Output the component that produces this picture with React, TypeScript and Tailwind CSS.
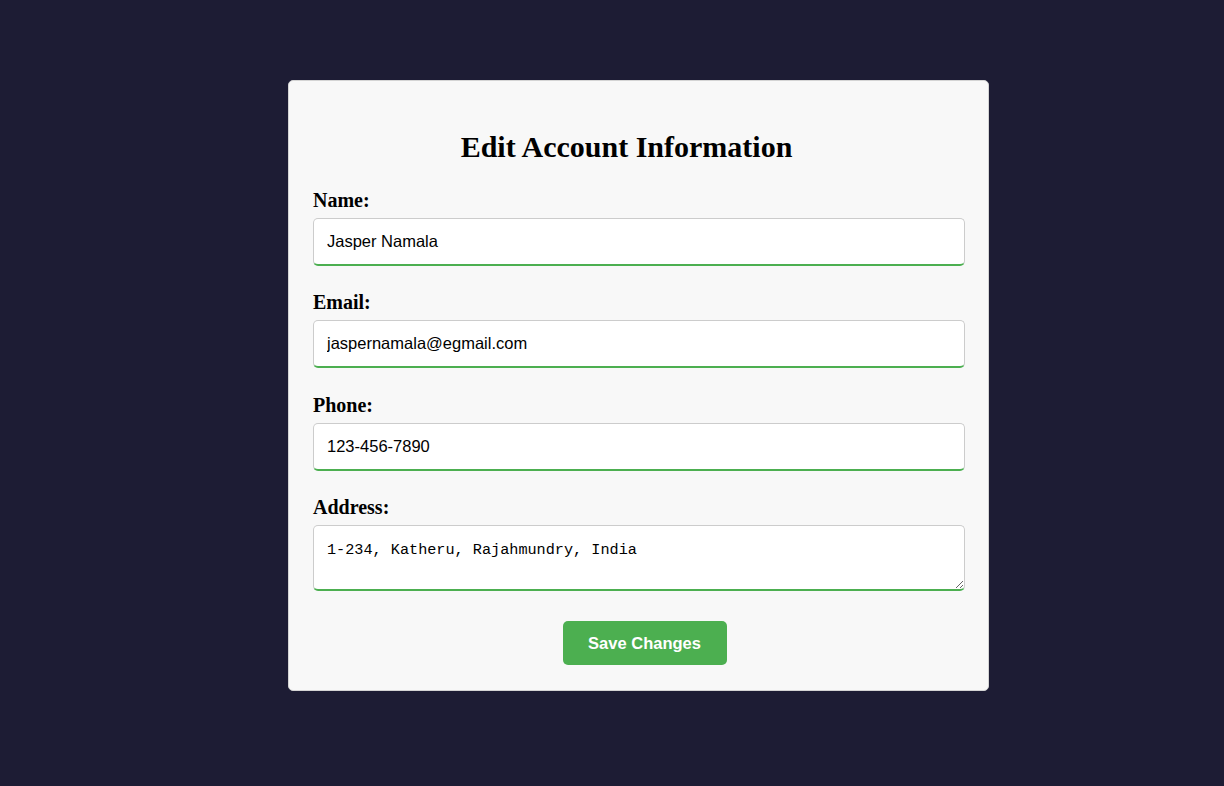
const fields = [
  { label: 'Name:', value: 'Jasper Namala' },
  { label: 'Email:', value: 'jaspernamala@egmail.com' },
  { label: 'Phone:', value: '123-456-7890' },
];

const labelCls =
  "block text-[20px] leading-[24px] font-bold text-black font-['Liberation_Serif',serif] mb-[6px]";

const App = () => {
  return (
    <div className="min-h-[786px] w-full bg-[#1d1c34] pt-[80px] pl-[288px]">
      <div className="w-[701px] rounded-[5px] border border-[#d4d4d4] bg-[#f8f8f8] pl-6 pr-[23px] pt-[48px] pb-[25px]">
        <h2 className="pr-[25px] text-center text-[30px] leading-[36px] font-bold text-black font-['Liberation_Serif',serif] mb-[23px]">
          Edit Account Information
        </h2>
        <form className="flex flex-col" onSubmit={(e) => e.preventDefault()}>
          {fields.map((f) => (
            <div key={f.label} className="mb-[24.4px]">
              <label className={labelCls}>{f.label}</label>
              <input
                defaultValue={f.value}
                className="block h-[48px] w-[652px] rounded-[5px] border border-b-2 border-[#cccccc] border-b-[#4caf50] bg-white pl-[13px] pr-3 text-[16.5px] text-black font-['Liberation_Sans',Arial,sans-serif] outline-none"
              />
            </div>
          ))}
          <div>
            <label className={labelCls}>Address:</label>
            <textarea
              defaultValue="1-234, Katheru, Rajahmundry, India"
              className="block h-[66px] w-[652px] rounded-[5px] border border-b-2 border-[#cccccc] border-b-[#4caf50] bg-white pl-[13px] pr-3 pt-[15px] text-[15.2px] leading-[18px] text-black font-['Liberation_Mono',monospace] outline-none"
            />
          </div>
          <div className="mt-[30px] flex justify-center pl-[11px]">
            <button
              type="submit"
              className="h-[44px] w-[164px] rounded-[5px] bg-[#4caf50] text-[16.5px] font-bold text-white font-['Liberation_Sans',Arial,sans-serif]"
            >
              Save Changes
            </button>
          </div>
        </form>
      </div>
    </div>
  );
};

export default App;
